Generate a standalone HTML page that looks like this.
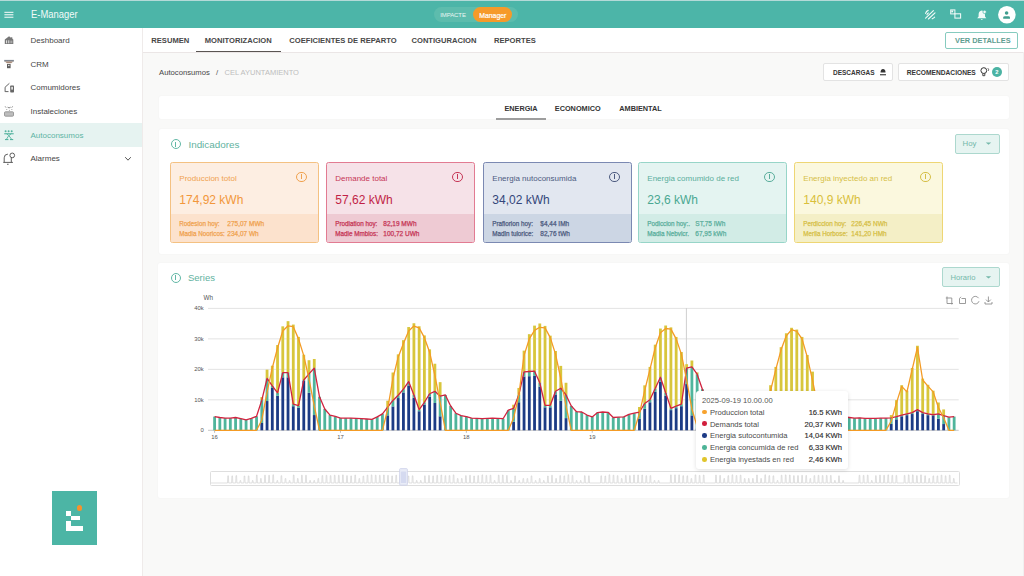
<!DOCTYPE html>
<html><head><meta charset="utf-8">
<style>
*{box-sizing:border-box;margin:0;padding:0}
html,body{width:1024px;height:576px;overflow:hidden;background:#f9f9f8;font-family:"Liberation Sans",sans-serif;color:#444;position:relative}
.abs{position:absolute}
.t{position:absolute;white-space:nowrap;line-height:1}
#top{position:absolute;left:0;top:0;width:1024px;height:28px;background:#4cb5a8;border-top:1px solid #b4dad8}
#side{position:absolute;left:0;top:28px;width:143px;height:548px;background:#fff;border-right:1px solid #efebea}
.si{position:absolute;font-size:8px;color:#464646;left:30.5px}
#tabs{position:absolute;left:143px;top:28px;width:881px;height:24.5px;background:#fff;border-bottom:1px solid #ebe6e6}
.tb{position:absolute;top:9px;font-size:7.6px;font-weight:bold;color:#474747;white-space:nowrap;line-height:1}
.card{position:absolute;background:#fff;border-radius:2px;box-shadow:0 0 1.5px rgba(0,0,0,0.05)}
.kpi{position:absolute;top:162px;width:149px;height:81px;border:1px solid;border-radius:2.5px;overflow:hidden}
.kpi .tt{position:absolute;left:8.3px;top:11.6px;font-size:8px;white-space:nowrap;line-height:1}
.kpi .v{position:absolute;left:8.3px;top:30.6px;font-size:12px;white-space:nowrap;line-height:1}
.kpi .b{position:absolute;left:0;top:51px;width:100%;height:30px}
.kpi .l{position:absolute;left:8.3px;font-size:6.3px;font-weight:normal;white-space:nowrap;line-height:1;-webkit-text-stroke:0.25px currentColor}
.kpi .l b{font-weight:normal;font-size:6.5px;top:-0.2px}
.kpi .l b{position:absolute;left:48px}
.kpi .ic{position:absolute;left:125.4px;top:8.8px;width:10.2px;height:10.2px;border:1.2px solid;border-radius:50%}
.kpi .ic:after{content:"";position:absolute;left:3.3px;top:1.6px;width:1.2px;height:4.2px;background:currentColor}
.btn{position:absolute;background:#fff;border:1px solid #e3e3e3;border-radius:2px}
.tip .r{position:absolute;left:13.6px;font-size:7.6px;color:#4a4a4a;white-space:nowrap;line-height:1}
.tip .dot{position:absolute;left:6px;width:4.6px;height:4.6px;border-radius:50%}
.tip .val{position:absolute;right:5.8px;font-size:7.6px;color:#2e2e2e;white-space:nowrap;line-height:1;font-weight:normal;-webkit-text-stroke:0.15px #2e2e2e}
</style></head><body>
<div id="top">
  <svg class="abs" style="left:0;top:-1px" width="140" height="28">
    <g fill="#eaf6f3"><rect x="4.4" y="11.8" width="9" height="1.1"/><rect x="4.4" y="14.2" width="9" height="1.1"/><rect x="4.4" y="16.7" width="9" height="1.1"/></g>
  </svg>
  <div class="t" style="left:30.5px;top:7.6px;font-size:10.6px;color:#f2faf8;transform:scaleX(0.89);transform-origin:0 0">E-Manager</div>
  <div class="abs" style="left:434px;top:6px;width:84px;height:15px;border-radius:8px;background:#5dbcad"></div>
  <div class="t" style="left:440.3px;top:10.5px;font-size:6px;color:#e9f6f3;letter-spacing:-0.1px">IMPACTE</div>
  <div class="abs" style="left:472.7px;top:6px;width:39.5px;height:15px;border-radius:8px;background:#f69a2a"></div>
  <div class="t" style="left:479.2px;top:11.7px;font-size:6.9px;color:#fff;-webkit-text-stroke:0.2px #fff">Manager</div>
  <svg class="abs" style="left:900px;top:-1px" width="124" height="28">
    <g stroke="#f2faf8" stroke-width="1.15" fill="none" stroke-linecap="round">
      <line x1="25.6" y1="18.2" x2="33.4" y2="10.6"/><line x1="28.4" y1="19" x2="35" y2="12.8"/>
      <path d="M25.6 13.4 q0.6 -2.2 2.6 -3"/><path d="M27 14.6 q0.4 -1.2 1.4 -1.6"/>
      <path d="M32.2 18.8 q1.4 -0.4 2.4 -1.6"/>
    </g>
    <rect x="50.7" y="9.9" width="4.2" height="4" fill="none" stroke="#f2faf8" stroke-width="1"/>
    <rect x="51.3" y="10.5" width="1.8" height="1.8" fill="#f2faf8"/>
    <rect x="54.9" y="13.8" width="5.7" height="4.3" fill="none" stroke="#f2faf8" stroke-width="1.05"/>
    <path d="M77.2 18.2 H86.3 L85 16.6 V14.6 Q85 11 81.8 10.6 Q78.6 11 78.6 14.6 V16.6 Z M80.6 18.9 H83 L81.8 20 Z" fill="#f2faf8"/>
    <circle cx="84.6" cy="11.9" r="1.7" fill="#f2faf8" stroke="#4cb5a8" stroke-width="0.7"/>
    <circle cx="106.9" cy="14.8" r="8.8" fill="#fff"/>
    <circle cx="106.6" cy="13" r="1.8" fill="#3f9e8f"/>
    <path d="M103.2 18.7 V17.6 Q103.2 16.2 105 16.2 H108.3 Q110 16.2 110 17.6 V18.7 Z" fill="#3f9e8f"/>
  </svg>
</div>

<div id="side">
  <svg class="abs" style="left:0;top:-28px" width="20" height="200">
    <path d="M9.05 36.3 L13.3 39.6 V44.1 H4.8 V39.6 Z" fill="#777"/>
    <rect x="11" y="37.3" width="1.3" height="2" fill="#777"/>
    <g fill="#dcdcdc"><rect x="6" y="40.3" width="1.1" height="3"/><rect x="8.2" y="40.3" width="1.1" height="3"/><rect x="10.3" y="40.6" width="2.1" height="2.6" fill="#a9a9a9"/></g>
    <path d="M4.2 59.9 H13.9 V61.6 H4.2 Z" fill="#7f8690"/>
    <path d="M4.8 61.6 H13.3 L11.2 63.3 H7 Z" fill="#a98c7a"/>
    <rect x="7" y="64" width="3.6" height="4.2" fill="#5e5e5e"/>
    <circle cx="8.8" cy="65.5" r="0.8" fill="#e8e8e8"/>
    <g fill="none" stroke="#666" stroke-width="1"><path d="M5.1 91.8 V87.2 L9.4 83.3"/><path d="M5.1 91.6 H8.5"/></g>
    <rect x="10.2" y="85.5" width="3.8" height="7" rx="0.7" fill="#666"/><rect x="11.3" y="86.8" width="1.6" height="2.8" fill="#eee"/>
    <g fill="none" stroke="#777" stroke-width="0.9"><path d="M5.2 106.4 l0.8 1.2 M7.6 107.2 q1.4 1.4 3 0 M12.6 106.4 l-0.8 1.2"/></g>
    <g fill="#888"><circle cx="6.8" cy="109.6" r="0.5"/><circle cx="9.4" cy="110.2" r="0.5"/><circle cx="11.9" cy="109.6" r="0.5"/></g>
    <rect x="4.5" y="111.8" width="9" height="4.4" rx="0.9" fill="#bdbdbd" stroke="#8a8a8a" stroke-width="0.8"/>
    <g fill="none" stroke="#555" stroke-width="0.95">
      <path d="M3.3 162.4 H12.9 M4.2 162.4 V157.8 Q4.2 154.2 7.9 154.1"/><path d="M11.3 157.8 V162.4"/>
      <circle cx="12.25" cy="155.4" r="2.35"/>
    </g>
    <rect x="7" y="163.8" width="1.6" height="0.9" fill="#555"/>
  </svg>
  <div class="si t" style="top:9.4px">Deshboard</div>
  <div class="si t" style="top:32.8px">CRM</div>
  <div class="si t" style="top:56.4px">Comumidores</div>
  <div class="si t" style="top:80px">Instaleciones</div>
  <div class="abs" style="left:0;top:95.4px;width:142px;height:23.2px;background:#e6f3f1"></div>
  <svg class="abs" style="left:0;top:-28px" width="20" height="200">
    <g fill="#54b39f"><circle cx="5.6" cy="131.3" r="1"/><circle cx="8.6" cy="131.3" r="1"/><circle cx="11.7" cy="131.3" r="1"/>
    <rect x="4.2" y="133.2" width="9.5" height="1.1"/><rect x="5" y="139" width="3.4" height="1.1"/><rect x="10" y="139" width="3.2" height="1.1"/></g>
    <path d="M6.6 133.8 L8.8 135.5 L11.3 133.8 M8.8 135.5 L6.6 139 M8.8 135.5 L11.4 139" fill="none" stroke="#54b39f" stroke-width="0.9"/>
  </svg>
  <div class="si t" style="top:103.6px;color:#5db4a4">Autoconsumos</div>
  <div class="si t" style="top:127px">Alarmes</div>
  <svg class="abs" style="left:120px;top:124px" width="16" height="10"><path d="M5.2 5.2 L8 8.2 L10.8 5.2" fill="none" stroke="#555" stroke-width="1"/></svg>
  <div class="abs" style="left:51.8px;top:463.2px;width:45.3px;height:53.6px;background:#4cb5a5"></div>
  <div class="abs" style="left:65.9px;top:482.9px;width:5.3px;height:4.8px;background:#fff"></div>
  <div class="abs" style="left:71.2px;top:487.7px;width:8.8px;height:4.8px;background:#fff"></div>
  <div class="abs" style="left:65.9px;top:492.5px;width:5.3px;height:10.2px;background:#fff"></div>
  <div class="abs" style="left:65.9px;top:497.6px;width:16.9px;height:5.1px;background:#fff"></div>
  <div class="abs" style="left:76.8px;top:477.3px;width:5.6px;height:5.6px;border-radius:50%;background:#f7922c"></div>
</div>

<div id="tabs">
  <div class="tb" style="left:8.3px">RESUMEN</div>
  <div class="tb" style="left:61.8px">MONITORIZACION</div>
  <div class="abs" style="left:53px;top:22.8px;width:84.6px;height:1.4px;background:#5a5553"></div>
  <div class="tb" style="left:146.3px">COEFICIENTES DE REPARTO</div>
  <div class="tb" style="left:268.5px">CONTIGURACION</div>
  <div class="tb" style="left:351px">REPORTES</div>
  <div class="abs" style="left:802.4px;top:3.5px;width:72.4px;height:17.2px;border:1px solid #86cbbf;border-radius:2px"></div>
  <div class="tb" style="left:812px;top:9px;color:#5e9d91;font-size:7.4px">VER DETALLES</div>
</div>

<!-- breadcrumb -->
<div class="t" style="left:159px;top:69px;font-size:7.7px;color:#474747">Autoconsumos</div>
<div class="t" style="left:216px;top:69px;font-size:7.7px;color:#555">/</div>
<div class="t" style="left:224.6px;top:69px;font-size:7.5px;color:#bdbdbd">CEL AYUNTAMIENTO</div>
<div class="btn" style="left:823.4px;top:63.4px;width:69.7px;height:17.4px"></div>
<div class="t" style="left:833px;top:69.6px;font-size:6.5px;font-weight:bold;color:#363636">DESCARGAS</div>
<svg class="abs" style="left:878px;top:66px" width="10" height="12"><path d="M2.5 6.6 q0 -3.6 2.5 -3.6 q2.5 0 2.5 3.6 z" fill="#333"/><rect x="2" y="8.2" width="6" height="1.1" fill="#333"/></svg>
<div class="btn" style="left:897.6px;top:63.4px;width:111.7px;height:17.4px"></div>
<div class="t" style="left:906.8px;top:69.6px;font-size:6.65px;font-weight:bold;color:#363636">RECOMENDACIONES</div>
<svg class="abs" style="left:978px;top:65px" width="14" height="14"><circle cx="5.8" cy="5.6" r="2.9" fill="none" stroke="#333" stroke-width="1"/><path d="M4.8 8.5 v2.2 h2 v-2.2" fill="none" stroke="#333" stroke-width="0.9"/><path d="M9.8 3.2 q1.3 1 0.6 2.6" fill="none" stroke="#333" stroke-width="0.8"/></svg>
<div class="abs" style="left:991.8px;top:67.4px;width:10.1px;height:10.1px;border-radius:50%;background:#4bb3a3"></div>
<div class="t" style="left:995.3px;top:69.8px;font-size:5.8px;color:#fff;font-weight:bold">2</div>

<!-- tabs card -->
<div class="card" style="left:158.6px;top:95.6px;width:850.5px;height:23.6px"></div>
<div class="tb" style="left:504.4px;top:104.8px;font-size:7.3px;color:#333">ENERGIA</div>
<div class="tb" style="left:554.8px;top:104.8px;font-size:7.3px;color:#333">ECONOMICO</div>
<div class="tb" style="left:619.3px;top:104.8px;font-size:7.3px;color:#333">AMBIENTAL</div>
<div class="abs" style="left:496px;top:118px;width:49.8px;height:1.6px;background:#9d9d9d"></div>

<!-- indicadores card -->
<div class="card" style="left:158.6px;top:128.6px;width:850.5px;height:125.2px"></div>
<div class="abs" style="left:170.5px;top:139.2px;width:10.2px;height:10.2px;border:1.2px solid #62b8a6;border-radius:50%"></div>
<div class="abs" style="left:175px;top:141.8px;width:1.2px;height:5px;background:#62b8a6"></div>
<div class="t" style="left:188.4px;top:139.8px;font-size:9.9px;color:#5fb2a0">Indicadores</div>
<div class="abs" style="left:955.2px;top:134.2px;width:45.1px;height:19.6px;background:#e6f4f1;border:1px solid #acd8ce;border-radius:2px"></div>
<div class="t" style="left:962.6px;top:140px;font-size:7.8px;color:#74b8aa">Hoy</div>
<svg class="abs" style="left:984px;top:141px" width="9" height="5"><path d="M1.8 1.5 H7.2 L4.5 3.8 Z" fill="#74b8aa"/></svg>

<div class="kpi" style="left:170px;border-color:#f4c182;background:#fdeee2;color:#f0a24f">
  <div class="tt">Produccion totol</div><div class="ic"></div>
  <div class="v" style="color:#f2973b">174,92 kWh</div>
  <div class="b" style="background:#fce2cd"></div>
  <div class="l" style="top:58.3px">Rodesion hoy:<b>275,07 MWh</b></div>
  <div class="l" style="top:68.2px">Madia Nooricos:<b>234,07 Wh</b></div>
</div>
<div class="kpi" style="left:326px;border-color:#e27b92;background:#f6e2e8;color:#c63656">
  <div class="tt">Demande total</div><div class="ic"></div>
  <div class="v" style="color:#c11f46">57,62 kWh</div>
  <div class="b" style="background:#eecad3"></div>
  <div class="l" style="top:58.3px">Prodiation hoy:<b>82,19 MWh</b></div>
  <div class="l" style="top:68.2px">Madie Mmbios:<b>100,72 UWh</b></div>
</div>
<div class="kpi" style="left:483px;border-color:#7b89b2;background:#e2e7f0;color:#4d5b80">
  <div class="tt">Energia nutoconsumida</div><div class="ic"></div>
  <div class="v" style="color:#34467a">34,02 kWh</div>
  <div class="b" style="background:#ccd6e4"></div>
  <div class="l" style="top:58.3px">Prafiorion hoy:<b>$4,44 IMh</b></div>
  <div class="l" style="top:68.2px">Madln tulorice:<b>82,76 tWh</b></div>
</div>
<div class="kpi" style="left:638px;border-color:#97d5c8;background:#e4f4f1;color:#5aae9c">
  <div class="tt">Energia comumido de red</div><div class="ic"></div>
  <div class="v" style="color:#4aa892">23,6 kWh</div>
  <div class="b" style="background:#d2ece6"></div>
  <div class="l" style="top:58.3px">Podiccion hoy:.<b>ST,75 IWh</b></div>
  <div class="l" style="top:68.2px">Madia Nebvicr.<b>67,95 kWh</b></div>
</div>
<div class="kpi" style="left:794px;border-color:#eed674;background:#fbf8de;color:#d6bf47">
  <div class="tt">Energia inyectedo an red</div><div class="ic"></div>
  <div class="v" style="color:#d9bf3b">140,9 kWh</div>
  <div class="b" style="background:#f4efc6"></div>
  <div class="l" style="top:58.3px">Perdiccion hoy:<b>226,45 NWh</b></div>
  <div class="l" style="top:68.2px">Merila Horbose:<b>141,20 HMh</b></div>
</div>

<!-- series card -->
<div class="card" style="left:158.4px;top:262.7px;width:850.2px;height:235.2px"></div>
<div class="abs" style="left:170.6px;top:272.6px;width:10.2px;height:10.2px;border:1.2px solid #62b8a6;border-radius:50%"></div>
<div class="abs" style="left:175.1px;top:275.2px;width:1.2px;height:5px;background:#62b8a6"></div>
<div class="t" style="left:188px;top:273px;font-size:9.5px;color:#5fb2a0">Series</div>
<div class="abs" style="left:942.2px;top:267.2px;width:58.2px;height:20px;background:#e6f4f1;border:1px solid #acd8ce;border-radius:2px"></div>
<div class="t" style="left:950.6px;top:274px;font-size:7.6px;color:#74b8aa">Horario</div>
<svg class="abs" style="left:984px;top:275px" width="9" height="5"><path d="M1.8 1.2 H7.2 L4.5 3.5 Z" fill="#74b8aa"/></svg>
<svg class="abs" style="left:940px;top:292px" width="60" height="16">
  <g fill="none" stroke="#8a8a8a" stroke-width="0.85">
    <path d="M7 4.5 V11.5 H13 M5.8 6 H11.8 V12.5"/>
    <path d="M19.5 6.5 L21 4.8 M19.5 6.5 V11.5 H25.5 V6.5 H21.5"/>
    <path d="M38.6 6.2 A3.8 3.8 0 1 0 39 9.2"/>
    <path d="M48.4 4.5 V10 M46 7.6 L48.4 10 L50.8 7.6 M45 10 V12 H52 V10"/>
  </g>
</svg>

<svg class="abs" style="left:0;top:0" width="1024" height="576" viewBox="0 0 1024 576">
<g><line x1="208" x2="958.7" y1="399.82" y2="399.82" stroke="#e3e3e3" stroke-width="1"/><line x1="208" x2="958.7" y1="369.35" y2="369.35" stroke="#e3e3e3" stroke-width="1"/><line x1="208" x2="958.7" y1="338.88" y2="338.88" stroke="#e3e3e3" stroke-width="1"/><line x1="208" x2="958.7" y1="308.40" y2="308.40" stroke="#e3e3e3" stroke-width="1"/></g>
<line x1="208" x2="958.7" y1="430.3" y2="430.3" stroke="#c9c9c9" stroke-width="1"/>
<line x1="686.4" x2="686.4" y1="308" y2="430" stroke="#cfcfcf" stroke-width="1"/>
<g><rect x="213.20" y="416.59" width="2.8" height="13.71" fill="#4fb59c"/><rect x="218.44" y="417.50" width="2.8" height="12.80" fill="#4fb59c"/><rect x="223.69" y="418.11" width="2.8" height="12.19" fill="#4fb59c"/><rect x="228.93" y="418.11" width="2.8" height="12.19" fill="#4fb59c"/><rect x="234.18" y="417.50" width="2.8" height="12.80" fill="#4fb59c"/><rect x="239.42" y="418.72" width="2.8" height="11.58" fill="#4fb59c"/><rect x="244.67" y="419.94" width="2.8" height="10.36" fill="#4fb59c"/><rect x="249.91" y="418.41" width="2.8" height="11.89" fill="#4fb59c"/><rect x="255.16" y="416.28" width="2.8" height="14.02" fill="#4fb59c"/><rect x="260.41" y="422.99" width="2.8" height="7.31" fill="#1c3b85"/><rect x="260.41" y="400.13" width="2.8" height="22.86" fill="#4fb59c"/><rect x="260.41" y="397.08" width="2.8" height="3.05" fill="#d8c63c"/><rect x="265.65" y="401.04" width="2.8" height="29.26" fill="#1c3b85"/><rect x="265.65" y="378.49" width="2.8" height="22.55" fill="#4fb59c"/><rect x="265.65" y="369.65" width="2.8" height="8.84" fill="#d8c63c"/><rect x="270.90" y="387.94" width="2.8" height="42.36" fill="#1c3b85"/><rect x="270.90" y="385.81" width="2.8" height="2.13" fill="#4fb59c"/><rect x="270.90" y="365.69" width="2.8" height="20.11" fill="#d8c63c"/><rect x="276.14" y="395.81" width="2.8" height="34.49" fill="#1c3b85"/><rect x="276.14" y="392.82" width="2.8" height="3.00" fill="#4fb59c"/><rect x="276.14" y="345.02" width="2.8" height="47.80" fill="#d8c63c"/><rect x="281.38" y="377.31" width="2.8" height="52.99" fill="#1c3b85"/><rect x="281.38" y="372.70" width="2.8" height="4.61" fill="#4fb59c"/><rect x="281.38" y="326.34" width="2.8" height="46.36" fill="#d8c63c"/><rect x="286.63" y="377.31" width="2.8" height="52.99" fill="#1c3b85"/><rect x="286.63" y="372.70" width="2.8" height="4.61" fill="#4fb59c"/><rect x="286.63" y="321.16" width="2.8" height="51.54" fill="#d8c63c"/><rect x="291.88" y="406.19" width="2.8" height="24.11" fill="#1c3b85"/><rect x="291.88" y="404.09" width="2.8" height="2.10" fill="#4fb59c"/><rect x="291.88" y="324.59" width="2.8" height="79.50" fill="#d8c63c"/><rect x="297.12" y="407.59" width="2.8" height="22.71" fill="#1c3b85"/><rect x="297.12" y="405.62" width="2.8" height="1.97" fill="#4fb59c"/><rect x="297.12" y="336.90" width="2.8" height="68.72" fill="#d8c63c"/><rect x="302.37" y="380.93" width="2.8" height="49.37" fill="#1c3b85"/><rect x="302.37" y="380.02" width="2.8" height="0.91" fill="#4fb59c"/><rect x="302.37" y="354.72" width="2.8" height="25.29" fill="#d8c63c"/><rect x="307.61" y="392.82" width="2.8" height="37.48" fill="#1c3b85"/><rect x="307.61" y="373.92" width="2.8" height="18.89" fill="#4fb59c"/><rect x="307.61" y="360.21" width="2.8" height="13.71" fill="#d8c63c"/><rect x="312.86" y="415.06" width="2.8" height="15.24" fill="#1c3b85"/><rect x="312.86" y="368.13" width="2.8" height="46.93" fill="#4fb59c"/><rect x="312.86" y="358.99" width="2.8" height="9.14" fill="#d8c63c"/><rect x="318.10" y="396.78" width="2.8" height="33.52" fill="#4fb59c"/><rect x="323.35" y="408.97" width="2.8" height="21.33" fill="#4fb59c"/><rect x="328.59" y="415.06" width="2.8" height="15.24" fill="#4fb59c"/><rect x="333.84" y="416.28" width="2.8" height="14.02" fill="#4fb59c"/><rect x="339.08" y="418.11" width="2.8" height="12.19" fill="#4fb59c"/><rect x="344.33" y="418.11" width="2.8" height="12.19" fill="#4fb59c"/><rect x="349.57" y="418.11" width="2.8" height="12.19" fill="#4fb59c"/><rect x="354.82" y="418.41" width="2.8" height="11.89" fill="#4fb59c"/><rect x="360.06" y="418.72" width="2.8" height="11.58" fill="#4fb59c"/><rect x="365.31" y="419.02" width="2.8" height="11.28" fill="#4fb59c"/><rect x="370.55" y="419.33" width="2.8" height="10.97" fill="#4fb59c"/><rect x="375.80" y="416.89" width="2.8" height="13.41" fill="#4fb59c"/><rect x="381.04" y="413.84" width="2.8" height="16.46" fill="#4fb59c"/><rect x="386.29" y="415.37" width="2.8" height="14.93" fill="#1c3b85"/><rect x="386.29" y="407.14" width="2.8" height="8.23" fill="#4fb59c"/><rect x="386.29" y="400.74" width="2.8" height="6.40" fill="#d8c63c"/><rect x="391.53" y="406.41" width="2.8" height="23.89" fill="#1c3b85"/><rect x="391.53" y="400.43" width="2.8" height="5.97" fill="#4fb59c"/><rect x="391.53" y="372.52" width="2.8" height="27.92" fill="#d8c63c"/><rect x="396.78" y="398.06" width="2.8" height="32.24" fill="#1c3b85"/><rect x="396.78" y="395.25" width="2.8" height="2.80" fill="#4fb59c"/><rect x="396.78" y="354.36" width="2.8" height="40.90" fill="#d8c63c"/><rect x="402.02" y="392.45" width="2.8" height="37.85" fill="#1c3b85"/><rect x="402.02" y="389.16" width="2.8" height="3.29" fill="#4fb59c"/><rect x="402.02" y="340.15" width="2.8" height="49.00" fill="#d8c63c"/><rect x="407.26" y="385.44" width="2.8" height="44.86" fill="#1c3b85"/><rect x="407.26" y="381.54" width="2.8" height="3.90" fill="#4fb59c"/><rect x="407.26" y="327.05" width="2.8" height="54.49" fill="#d8c63c"/><rect x="412.51" y="397.78" width="2.8" height="32.52" fill="#1c3b85"/><rect x="412.51" y="394.95" width="2.8" height="2.83" fill="#4fb59c"/><rect x="412.51" y="323.25" width="2.8" height="71.70" fill="#d8c63c"/><rect x="417.75" y="411.23" width="2.8" height="19.07" fill="#1c3b85"/><rect x="417.75" y="409.58" width="2.8" height="1.66" fill="#4fb59c"/><rect x="417.75" y="326.25" width="2.8" height="83.33" fill="#d8c63c"/><rect x="423.00" y="404.51" width="2.8" height="25.79" fill="#1c3b85"/><rect x="423.00" y="402.26" width="2.8" height="2.24" fill="#4fb59c"/><rect x="423.00" y="335.41" width="2.8" height="66.85" fill="#d8c63c"/><rect x="428.25" y="396.66" width="2.8" height="33.64" fill="#1c3b85"/><rect x="428.25" y="393.73" width="2.8" height="2.93" fill="#4fb59c"/><rect x="428.25" y="349.36" width="2.8" height="44.37" fill="#d8c63c"/><rect x="433.49" y="402.99" width="2.8" height="27.31" fill="#1c3b85"/><rect x="433.49" y="391.29" width="2.8" height="11.70" fill="#4fb59c"/><rect x="433.49" y="363.74" width="2.8" height="27.55" fill="#d8c63c"/><rect x="438.74" y="416.28" width="2.8" height="14.02" fill="#1c3b85"/><rect x="438.74" y="396.17" width="2.8" height="20.11" fill="#4fb59c"/><rect x="438.74" y="382.15" width="2.8" height="14.02" fill="#d8c63c"/><rect x="443.98" y="394.95" width="2.8" height="35.35" fill="#4fb59c"/><rect x="449.23" y="405.92" width="2.8" height="24.38" fill="#4fb59c"/><rect x="454.47" y="413.23" width="2.8" height="17.07" fill="#4fb59c"/><rect x="459.72" y="415.67" width="2.8" height="14.63" fill="#4fb59c"/><rect x="464.96" y="416.59" width="2.8" height="13.71" fill="#4fb59c"/><rect x="470.21" y="418.11" width="2.8" height="12.19" fill="#4fb59c"/><rect x="475.45" y="418.41" width="2.8" height="11.89" fill="#4fb59c"/><rect x="480.70" y="418.72" width="2.8" height="11.58" fill="#4fb59c"/><rect x="485.94" y="418.41" width="2.8" height="11.89" fill="#4fb59c"/><rect x="491.19" y="418.11" width="2.8" height="12.19" fill="#4fb59c"/><rect x="496.43" y="418.41" width="2.8" height="11.89" fill="#4fb59c"/><rect x="501.68" y="418.72" width="2.8" height="11.58" fill="#4fb59c"/><rect x="506.92" y="410.19" width="2.8" height="20.11" fill="#4fb59c"/><rect x="512.17" y="421.77" width="2.8" height="8.53" fill="#1c3b85"/><rect x="512.17" y="408.36" width="2.8" height="13.41" fill="#4fb59c"/><rect x="512.17" y="404.70" width="2.8" height="3.66" fill="#d8c63c"/><rect x="517.41" y="402.26" width="2.8" height="28.04" fill="#1c3b85"/><rect x="517.41" y="394.95" width="2.8" height="7.31" fill="#4fb59c"/><rect x="517.41" y="387.94" width="2.8" height="7.01" fill="#d8c63c"/><rect x="522.65" y="376.47" width="2.8" height="53.83" fill="#1c3b85"/><rect x="522.65" y="371.79" width="2.8" height="4.68" fill="#4fb59c"/><rect x="522.65" y="350.65" width="2.8" height="21.14" fill="#d8c63c"/><rect x="527.90" y="376.19" width="2.8" height="54.11" fill="#1c3b85"/><rect x="527.90" y="371.48" width="2.8" height="4.71" fill="#4fb59c"/><rect x="527.90" y="334.17" width="2.8" height="37.31" fill="#d8c63c"/><rect x="533.14" y="375.91" width="2.8" height="54.39" fill="#1c3b85"/><rect x="533.14" y="371.18" width="2.8" height="4.73" fill="#4fb59c"/><rect x="533.14" y="325.61" width="2.8" height="45.57" fill="#d8c63c"/><rect x="538.39" y="386.56" width="2.8" height="43.74" fill="#1c3b85"/><rect x="538.39" y="382.76" width="2.8" height="3.80" fill="#4fb59c"/><rect x="538.39" y="323.49" width="2.8" height="59.27" fill="#d8c63c"/><rect x="543.63" y="407.31" width="2.8" height="22.99" fill="#1c3b85"/><rect x="543.63" y="405.31" width="2.8" height="2.00" fill="#4fb59c"/><rect x="543.63" y="325.90" width="2.8" height="79.41" fill="#d8c63c"/><rect x="548.88" y="407.31" width="2.8" height="22.99" fill="#1c3b85"/><rect x="548.88" y="405.31" width="2.8" height="2.00" fill="#4fb59c"/><rect x="548.88" y="335.66" width="2.8" height="69.65" fill="#d8c63c"/><rect x="554.12" y="394.41" width="2.8" height="35.89" fill="#1c3b85"/><rect x="554.12" y="391.29" width="2.8" height="3.12" fill="#4fb59c"/><rect x="554.12" y="350.99" width="2.8" height="40.30" fill="#d8c63c"/><rect x="559.37" y="400.86" width="2.8" height="29.44" fill="#1c3b85"/><rect x="559.37" y="388.24" width="2.8" height="12.62" fill="#4fb59c"/><rect x="559.37" y="365.88" width="2.8" height="22.37" fill="#d8c63c"/><rect x="564.62" y="418.11" width="2.8" height="12.19" fill="#1c3b85"/><rect x="564.62" y="394.95" width="2.8" height="23.16" fill="#4fb59c"/><rect x="564.62" y="382.76" width="2.8" height="12.19" fill="#d8c63c"/><rect x="569.86" y="405.92" width="2.8" height="24.38" fill="#4fb59c"/><rect x="575.11" y="411.71" width="2.8" height="18.59" fill="#4fb59c"/><rect x="580.35" y="412.01" width="2.8" height="18.29" fill="#4fb59c"/><rect x="585.60" y="415.06" width="2.8" height="15.24" fill="#4fb59c"/><rect x="590.84" y="416.89" width="2.8" height="13.41" fill="#4fb59c"/><rect x="596.09" y="412.62" width="2.8" height="17.68" fill="#4fb59c"/><rect x="601.33" y="412.01" width="2.8" height="18.29" fill="#4fb59c"/><rect x="606.58" y="412.32" width="2.8" height="17.98" fill="#4fb59c"/><rect x="611.82" y="417.50" width="2.8" height="12.80" fill="#4fb59c"/><rect x="617.07" y="417.20" width="2.8" height="13.10" fill="#4fb59c"/><rect x="622.31" y="416.89" width="2.8" height="13.41" fill="#4fb59c"/><rect x="627.56" y="414.45" width="2.8" height="15.85" fill="#4fb59c"/><rect x="632.80" y="413.23" width="2.8" height="17.07" fill="#4fb59c"/><rect x="638.05" y="418.57" width="2.8" height="11.73" fill="#1c3b85"/><rect x="638.05" y="412.01" width="2.8" height="6.55" fill="#4fb59c"/><rect x="638.05" y="406.99" width="2.8" height="5.03" fill="#d8c63c"/><rect x="643.29" y="408.85" width="2.8" height="21.45" fill="#1c3b85"/><rect x="643.29" y="403.48" width="2.8" height="5.36" fill="#4fb59c"/><rect x="643.29" y="385.32" width="2.8" height="18.16" fill="#d8c63c"/><rect x="648.54" y="402.26" width="2.8" height="28.04" fill="#1c3b85"/><rect x="648.54" y="399.82" width="2.8" height="2.44" fill="#4fb59c"/><rect x="648.54" y="366.91" width="2.8" height="32.91" fill="#d8c63c"/><rect x="653.78" y="391.89" width="2.8" height="38.41" fill="#1c3b85"/><rect x="653.78" y="388.55" width="2.8" height="3.34" fill="#4fb59c"/><rect x="653.78" y="344.68" width="2.8" height="43.87" fill="#d8c63c"/><rect x="659.02" y="381.52" width="2.8" height="48.78" fill="#1c3b85"/><rect x="659.02" y="377.27" width="2.8" height="4.24" fill="#4fb59c"/><rect x="659.02" y="328.54" width="2.8" height="48.74" fill="#d8c63c"/><rect x="664.27" y="395.81" width="2.8" height="34.49" fill="#1c3b85"/><rect x="664.27" y="392.82" width="2.8" height="3.00" fill="#4fb59c"/><rect x="664.27" y="325.51" width="2.8" height="67.30" fill="#d8c63c"/><rect x="669.51" y="410.11" width="2.8" height="20.19" fill="#1c3b85"/><rect x="669.51" y="408.36" width="2.8" height="1.76" fill="#4fb59c"/><rect x="669.51" y="327.37" width="2.8" height="80.99" fill="#d8c63c"/><rect x="674.76" y="408.15" width="2.8" height="22.15" fill="#1c3b85"/><rect x="674.76" y="406.22" width="2.8" height="1.93" fill="#4fb59c"/><rect x="674.76" y="336.95" width="2.8" height="69.28" fill="#d8c63c"/><rect x="680.00" y="406.19" width="2.8" height="24.11" fill="#1c3b85"/><rect x="680.00" y="404.09" width="2.8" height="2.10" fill="#4fb59c"/><rect x="680.00" y="352.02" width="2.8" height="52.08" fill="#d8c63c"/><rect x="685.25" y="384.04" width="2.8" height="46.26" fill="#1c3b85"/><rect x="685.25" y="368.22" width="2.8" height="15.82" fill="#4fb59c"/><rect x="685.25" y="364.20" width="2.8" height="4.02" fill="#d8c63c"/><rect x="690.50" y="415.37" width="2.8" height="14.93" fill="#1c3b85"/><rect x="690.50" y="366.91" width="2.8" height="48.46" fill="#4fb59c"/><rect x="690.50" y="360.51" width="2.8" height="6.40" fill="#d8c63c"/><rect x="695.74" y="428.47" width="2.8" height="1.83" fill="#1c3b85"/><rect x="695.74" y="374.23" width="2.8" height="54.25" fill="#4fb59c"/><rect x="695.74" y="372.40" width="2.8" height="1.83" fill="#d8c63c"/><rect x="700.99" y="389.16" width="2.8" height="41.14" fill="#4fb59c"/><rect x="706.23" y="405.92" width="2.8" height="24.38" fill="#4fb59c"/><rect x="711.48" y="413.54" width="2.8" height="16.76" fill="#4fb59c"/><rect x="716.72" y="416.59" width="2.8" height="13.71" fill="#4fb59c"/><rect x="721.97" y="417.50" width="2.8" height="12.80" fill="#4fb59c"/><rect x="727.21" y="418.11" width="2.8" height="12.19" fill="#4fb59c"/><rect x="732.46" y="418.11" width="2.8" height="12.19" fill="#4fb59c"/><rect x="737.70" y="417.81" width="2.8" height="12.49" fill="#4fb59c"/><rect x="742.95" y="418.11" width="2.8" height="12.19" fill="#4fb59c"/><rect x="748.19" y="417.50" width="2.8" height="12.80" fill="#4fb59c"/><rect x="753.44" y="416.59" width="2.8" height="13.71" fill="#4fb59c"/><rect x="758.68" y="413.54" width="2.8" height="16.76" fill="#4fb59c"/><rect x="763.93" y="417.50" width="2.8" height="12.80" fill="#1c3b85"/><rect x="763.93" y="408.97" width="2.8" height="8.53" fill="#4fb59c"/><rect x="763.93" y="403.48" width="2.8" height="5.49" fill="#d8c63c"/><rect x="769.17" y="408.36" width="2.8" height="21.94" fill="#1c3b85"/><rect x="769.17" y="402.87" width="2.8" height="5.49" fill="#4fb59c"/><rect x="769.17" y="385.20" width="2.8" height="17.68" fill="#d8c63c"/><rect x="774.42" y="402.26" width="2.8" height="28.04" fill="#1c3b85"/><rect x="774.42" y="399.82" width="2.8" height="2.44" fill="#4fb59c"/><rect x="774.42" y="366.91" width="2.8" height="32.91" fill="#d8c63c"/><rect x="779.66" y="399.46" width="2.8" height="30.84" fill="#1c3b85"/><rect x="779.66" y="396.78" width="2.8" height="2.68" fill="#4fb59c"/><rect x="779.66" y="347.16" width="2.8" height="49.61" fill="#d8c63c"/><rect x="784.91" y="400.86" width="2.8" height="29.44" fill="#1c3b85"/><rect x="784.91" y="398.30" width="2.8" height="2.56" fill="#4fb59c"/><rect x="784.91" y="333.27" width="2.8" height="65.03" fill="#d8c63c"/><rect x="790.15" y="407.87" width="2.8" height="22.43" fill="#1c3b85"/><rect x="790.15" y="405.92" width="2.8" height="1.95" fill="#4fb59c"/><rect x="790.15" y="327.78" width="2.8" height="78.14" fill="#d8c63c"/><rect x="795.40" y="410.67" width="2.8" height="19.63" fill="#1c3b85"/><rect x="795.40" y="408.97" width="2.8" height="1.71" fill="#4fb59c"/><rect x="795.40" y="329.55" width="2.8" height="79.42" fill="#d8c63c"/><rect x="800.64" y="407.87" width="2.8" height="22.43" fill="#1c3b85"/><rect x="800.64" y="405.92" width="2.8" height="1.95" fill="#4fb59c"/><rect x="800.64" y="336.92" width="2.8" height="69.00" fill="#d8c63c"/><rect x="805.89" y="405.07" width="2.8" height="25.23" fill="#1c3b85"/><rect x="805.89" y="402.87" width="2.8" height="2.19" fill="#4fb59c"/><rect x="805.89" y="354.97" width="2.8" height="47.91" fill="#d8c63c"/><rect x="811.13" y="410.03" width="2.8" height="20.27" fill="#1c3b85"/><rect x="811.13" y="401.35" width="2.8" height="8.69" fill="#4fb59c"/><rect x="811.13" y="371.64" width="2.8" height="29.71" fill="#d8c63c"/><rect x="816.38" y="418.11" width="2.8" height="12.19" fill="#1c3b85"/><rect x="816.38" y="405.92" width="2.8" height="12.19" fill="#4fb59c"/><rect x="816.38" y="393.73" width="2.8" height="12.19" fill="#d8c63c"/><rect x="821.62" y="412.01" width="2.8" height="18.29" fill="#4fb59c"/><rect x="826.87" y="415.06" width="2.8" height="15.24" fill="#4fb59c"/><rect x="832.11" y="416.59" width="2.8" height="13.71" fill="#4fb59c"/><rect x="837.36" y="417.20" width="2.8" height="13.10" fill="#4fb59c"/><rect x="842.60" y="416.89" width="2.8" height="13.41" fill="#4fb59c"/><rect x="847.85" y="417.50" width="2.8" height="12.80" fill="#4fb59c"/><rect x="853.09" y="418.11" width="2.8" height="12.19" fill="#4fb59c"/><rect x="858.34" y="417.81" width="2.8" height="12.49" fill="#4fb59c"/><rect x="863.58" y="418.41" width="2.8" height="11.89" fill="#4fb59c"/><rect x="868.83" y="418.41" width="2.8" height="11.89" fill="#4fb59c"/><rect x="874.07" y="418.41" width="2.8" height="11.89" fill="#4fb59c"/><rect x="879.32" y="418.11" width="2.8" height="12.19" fill="#4fb59c"/><rect x="884.56" y="418.11" width="2.8" height="12.19" fill="#4fb59c"/><rect x="889.81" y="423.90" width="2.8" height="6.40" fill="#1c3b85"/><rect x="889.81" y="417.81" width="2.8" height="6.10" fill="#4fb59c"/><rect x="889.81" y="415.06" width="2.8" height="2.74" fill="#d8c63c"/><rect x="895.05" y="419.33" width="2.8" height="10.97" fill="#1c3b85"/><rect x="895.05" y="416.59" width="2.8" height="2.74" fill="#4fb59c"/><rect x="895.05" y="400.13" width="2.8" height="16.46" fill="#d8c63c"/><rect x="900.30" y="416.28" width="2.8" height="14.02" fill="#1c3b85"/><rect x="900.30" y="415.06" width="2.8" height="1.22" fill="#4fb59c"/><rect x="900.30" y="385.20" width="2.8" height="29.87" fill="#d8c63c"/><rect x="905.54" y="415.16" width="2.8" height="15.14" fill="#1c3b85"/><rect x="905.54" y="413.84" width="2.8" height="1.32" fill="#4fb59c"/><rect x="905.54" y="390.58" width="2.8" height="23.26" fill="#d8c63c"/><rect x="910.79" y="414.04" width="2.8" height="16.26" fill="#1c3b85"/><rect x="910.79" y="412.62" width="2.8" height="1.41" fill="#4fb59c"/><rect x="910.79" y="367.94" width="2.8" height="44.69" fill="#d8c63c"/><rect x="916.03" y="411.23" width="2.8" height="19.07" fill="#1c3b85"/><rect x="916.03" y="409.58" width="2.8" height="1.66" fill="#4fb59c"/><rect x="916.03" y="345.75" width="2.8" height="63.83" fill="#d8c63c"/><rect x="921.28" y="414.04" width="2.8" height="16.26" fill="#1c3b85"/><rect x="921.28" y="412.62" width="2.8" height="1.41" fill="#4fb59c"/><rect x="921.28" y="378.60" width="2.8" height="34.02" fill="#d8c63c"/><rect x="926.52" y="415.16" width="2.8" height="15.14" fill="#1c3b85"/><rect x="926.52" y="413.84" width="2.8" height="1.32" fill="#4fb59c"/><rect x="926.52" y="384.79" width="2.8" height="29.05" fill="#d8c63c"/><rect x="931.77" y="416.00" width="2.8" height="14.30" fill="#1c3b85"/><rect x="931.77" y="414.76" width="2.8" height="1.24" fill="#4fb59c"/><rect x="931.77" y="390.66" width="2.8" height="24.10" fill="#d8c63c"/><rect x="937.01" y="418.78" width="2.8" height="11.52" fill="#1c3b85"/><rect x="937.01" y="413.84" width="2.8" height="4.94" fill="#4fb59c"/><rect x="937.01" y="402.51" width="2.8" height="11.34" fill="#d8c63c"/><rect x="942.26" y="424.05" width="2.8" height="6.25" fill="#1c3b85"/><rect x="942.26" y="415.67" width="2.8" height="8.38" fill="#4fb59c"/><rect x="942.26" y="409.42" width="2.8" height="6.25" fill="#d8c63c"/><rect x="947.50" y="417.20" width="2.8" height="13.10" fill="#4fb59c"/><rect x="952.75" y="416.59" width="2.8" height="13.71" fill="#4fb59c"/></g>
<polyline points="214.60,416.59 219.84,417.50 225.09,418.11 230.33,418.11 235.58,417.50 240.82,418.72 246.07,419.94 251.31,418.41 256.56,416.28 261.81,400.13 267.05,378.49 272.30,385.81 277.54,392.82 282.78,372.70 288.03,372.70 293.27,404.09 298.52,405.62 303.76,380.02 309.01,373.92 314.25,368.13 319.50,396.78 324.75,408.97 329.99,415.06 335.24,416.28 340.48,418.11 345.73,418.11 350.97,418.11 356.22,418.41 361.46,418.72 366.70,419.02 371.95,419.33 377.19,416.89 382.44,413.84 387.69,407.14 392.93,400.43 398.18,395.25 403.42,389.16 408.66,381.54 413.91,394.95 419.15,409.58 424.40,402.26 429.64,393.73 434.89,391.29 440.13,396.17 445.38,394.95 450.62,405.92 455.87,413.23 461.12,415.67 466.36,416.59 471.61,418.11 476.85,418.41 482.10,418.72 487.34,418.41 492.59,418.11 497.83,418.41 503.08,418.72 508.32,410.19 513.57,408.36 518.81,394.95 524.05,371.79 529.30,371.48 534.54,371.18 539.79,382.76 545.03,405.31 550.28,405.31 555.52,391.29 560.77,388.24 566.01,394.95 571.26,405.92 576.50,411.71 581.75,412.01 587.00,415.06 592.24,416.89 597.49,412.62 602.73,412.01 607.98,412.32 613.22,417.50 618.47,417.20 623.71,416.89 628.96,414.45 634.20,413.23 639.45,412.01 644.69,403.48 649.94,399.82 655.18,388.55 660.42,377.27 665.67,392.82 670.91,408.36 676.16,406.22 681.40,404.09 686.65,368.22 691.89,366.91 697.14,374.23 702.38,389.16 707.63,405.92 712.88,413.54 718.12,416.59 723.37,417.50 728.61,418.11 733.86,418.11 739.10,417.81 744.35,418.11 749.59,417.50 754.84,416.59 760.08,413.54 765.33,408.97 770.57,402.87 775.82,399.82 781.06,396.78 786.31,398.30 791.55,405.92 796.80,408.97 802.04,405.92 807.29,402.87 812.53,401.35 817.78,405.92 823.02,412.01 828.26,415.06 833.51,416.59 838.75,417.20 844.00,416.89 849.25,417.50 854.49,418.11 859.74,417.81 864.98,418.41 870.23,418.41 875.47,418.41 880.72,418.11 885.96,418.11 891.21,417.81 896.45,416.59 901.70,415.06 906.94,413.84 912.19,412.62 917.43,409.58 922.68,412.62 927.92,413.84 933.17,414.76 938.41,413.84 943.66,415.67 948.90,417.20 954.14,416.59" fill="none" stroke="#d1233f" stroke-width="1.3" stroke-linejoin="round"/>
<polyline points="214.60,430.30 219.84,430.30 225.09,430.30 230.33,430.30 235.58,430.30 240.82,430.30 246.07,430.30 251.31,430.30 256.56,430.30 261.81,419.94 267.05,392.21 272.30,367.83 277.54,348.02 282.78,330.95 288.03,325.77 293.27,326.69 298.52,338.88 303.76,355.64 309.01,379.10 314.25,405.92 319.50,430.30 324.75,430.30 329.99,430.30 335.24,430.30 340.48,430.30 345.73,430.30 350.97,430.30 356.22,430.30 361.46,430.30 366.70,430.30 371.95,430.30 377.19,430.30 382.44,430.30 387.69,408.97 392.93,378.49 398.18,357.16 403.42,343.45 408.66,330.95 413.91,326.08 419.15,327.90 424.40,337.66 429.64,352.28 434.89,375.44 440.13,402.26 445.38,430.30 450.62,430.30 455.87,430.30 461.12,430.30 466.36,430.30 471.61,430.30 476.85,430.30 482.10,430.30 487.34,430.30 492.59,430.30 497.83,430.30 503.08,430.30 508.32,430.30 513.57,418.11 518.81,395.25 524.05,355.33 529.30,338.88 534.54,330.34 539.79,327.29 545.03,327.90 550.28,337.66 555.52,354.11 560.77,378.49 566.01,405.92 571.26,430.30 576.50,430.30 581.75,430.30 587.00,430.30 592.24,430.30 597.49,430.30 602.73,430.30 607.98,430.30 613.22,430.30 618.47,430.30 623.71,430.30 628.96,430.30 634.20,430.30 639.45,413.54 644.69,390.68 649.94,369.35 655.18,348.02 660.42,332.78 665.67,328.51 670.91,329.12 676.16,338.88 681.40,354.11 686.65,380.02 691.89,408.97 697.14,426.64 702.38,430.30 707.63,430.30 712.88,430.30 718.12,430.30 723.37,430.30 728.61,430.30 733.86,430.30 739.10,430.30 744.35,430.30 749.59,430.30 754.84,430.30 760.08,430.30 765.33,412.01 770.57,390.68 775.82,369.35 781.06,349.85 786.31,335.83 791.55,329.73 796.80,331.26 802.04,338.88 807.29,357.16 812.53,380.32 817.78,405.92 823.02,430.30 828.26,430.30 833.51,430.30 838.75,430.30 844.00,430.30 849.25,430.30 854.49,430.30 859.74,430.30 864.98,430.30 870.23,430.30 875.47,430.30 880.72,430.30 885.96,430.30 891.21,421.16 896.45,402.87 901.70,386.42 906.94,391.90 912.19,369.35 917.43,347.41 922.68,380.02 927.92,386.11 933.17,391.90 938.41,407.44 943.66,417.81 948.90,430.30 954.14,430.30" fill="none" stroke="#f49b25" stroke-width="1.3" stroke-linejoin="round"/>
<g font-family="Liberation Sans" font-size="5.9" fill="#555"><text x="203.8" y="432.00" text-anchor="end">0</text><text x="203.8" y="401.52" text-anchor="end">10k</text><text x="203.8" y="371.05" text-anchor="end">20k</text><text x="203.8" y="340.57" text-anchor="end">30k</text><text x="203.8" y="310.10" text-anchor="end">40k</text></g>
<g font-family="Liberation Sans" font-size="5.9" fill="#555"><text x="214.60" y="438.8" text-anchor="middle">16</text><line x1="214.60" x2="214.60" y1="430.8" y2="432.8" stroke="#aaa" stroke-width="0.8"/><text x="340.48" y="438.8" text-anchor="middle">17</text><line x1="340.48" x2="340.48" y1="430.8" y2="432.8" stroke="#aaa" stroke-width="0.8"/><text x="466.36" y="438.8" text-anchor="middle">18</text><line x1="466.36" x2="466.36" y1="430.8" y2="432.8" stroke="#aaa" stroke-width="0.8"/><text x="592.24" y="438.8" text-anchor="middle">19</text><line x1="592.24" x2="592.24" y1="430.8" y2="432.8" stroke="#aaa" stroke-width="0.8"/></g>
<text x="203.5" y="300.2" font-family="Liberation Sans" font-size="6.3" fill="#555">Wh</text>
<rect x="210.5" y="471.5" width="749" height="14" fill="none" stroke="#dedede" stroke-width="1" rx="1"/>
<polyline points="211,483 227,483 227.5,483 227.8,475.8 228.4,475.8 228.7,483 231.6,483 231.9,475.9 232.5,475.9 232.8,483 235.7,483 236.0,475.6 236.6,475.6 236.9,483 239.8,483 240.1,480.5 240.7,480.5 241.0,483 243.9,483 244.2,476.0 244.8,476.0 245.1,483 248.0,483 248.3,475.9 248.9,475.9 249.2,483 252.1,483 252.4,480.5 253.0,480.5 253.3,483 256.2,483 256.5,475.0 257.1,475.0 257.4,483 260.3,483 260.6,478.5 261.2,478.5 261.5,483 264.4,483 264.7,475.2 265.3,475.2 265.6,483 268.5,483 268.8,475.3 269.4,475.3 269.7,483 272.6,483 272.9,474.8 273.5,474.8 273.8,483 276.7,483 277.0,480.5 277.6,480.5 277.9,483 280.8,483 281.1,475.7 281.7,475.7 282.0,483 284.9,483 285.2,478.5 285.8,478.5 286.1,483 289.0,483 289.3,480.5 289.9,480.5 290.2,483 293.1,483 293.4,475.0 294.0,475.0 294.3,483 297.2,483 297.5,478.5 298.1,478.5 298.4,483 301.3,483 301.6,475.2 302.2,475.2 302.5,483 305.4,483 305.7,475.3 306.3,475.3 306.6,483 309.5,483 309.8,480.5 310.4,480.5 310.7,483 313.6,483 313.9,480.5 314.5,480.5 314.8,483 317.7,483 318.0,478.5 318.6,478.5 318.9,483 321.8,483 322.1,475.5 322.7,475.5 323.0,483 325.9,483 326.2,475.3 326.8,475.3 327.1,483 330.0,483 330.3,475.6 330.9,475.6 331.2,483 334.1,483 334.4,475.2 335.0,475.2 335.3,483 338.2,483 338.5,475.3 339.1,475.3 339.4,483 342.3,483 342.6,474.9 343.2,474.9 343.5,483 346.4,483 346.7,475.7 347.3,475.7 347.6,483 350.5,483 350.8,475.9 351.4,475.9 351.7,483 354.6,483 354.9,475.1 355.5,475.1 355.8,483 358.7,483 359.0,478.5 359.6,478.5 359.9,483 362.8,483 363.1,476.0 363.7,476.0 364.0,483 366.9,483 367.2,475.1 367.8,475.1 368.1,483 371.0,483 371.3,474.9 371.9,474.9 372.2,483 375.1,483 375.4,475.2 376.0,475.2 376.3,483 379.2,483 379.5,475.3 380.1,475.3 380.4,483 383.3,483 383.6,475.0 384.2,475.0 384.5,483 387.4,483 387.7,475.4 388.3,475.4 388.6,483 391.5,483 391.8,475.9 392.4,475.9 392.7,483 395.6,483 395.9,475.2 396.5,475.2 396.8,483 399.7,483 400.0,475.0 400.6,475.0 400.9,483 403.8,483 404.1,475.5 404.7,475.5 405.0,483 407.9,483 408.2,476.0 408.8,476.0 409.1,483 412.0,483 412.3,475.8 412.9,475.8 413.2,483 416.1,483 416.4,480.5 417.0,480.5 417.3,483 420.2,483 420.5,480.5 421.1,480.5 421.4,483 424.3,483 424.6,475.8 425.2,475.8 425.5,483 428.4,483 428.7,475.5 429.3,475.5 429.6,483 432.5,483 432.8,475.9 433.4,475.9 433.7,483 436.6,483 436.9,475.3 437.5,475.3 437.8,483 440.7,483 441.0,475.0 441.6,475.0 441.9,483 444.8,483 445.1,475.7 445.7,475.7 446.0,483 448.9,483 449.2,475.6 449.8,475.6 450.1,483 453.0,483 453.3,474.9 453.9,474.9 454.2,483 457.1,483 457.4,478.5 458.0,478.5 458.3,483 461.2,483 461.5,478.5 462.1,478.5 462.4,483 465.3,483 465.6,475.7 466.2,475.7 466.5,483 469.4,483 469.7,475.3 470.3,475.3 470.6,483 473.5,483 473.8,476.0 474.4,476.0 474.7,483 477.6,483 477.9,475.6 478.5,475.6 478.8,483 481.7,483 482.0,474.9 482.6,474.9 482.9,483 485.8,483 486.1,475.4 486.7,475.4 487.0,483 489.9,483 490.2,475.2 490.8,475.2 491.1,483 494.0,483 494.3,480.5 494.9,480.5 495.2,483 498.1,483 498.4,475.1 499.0,475.1 499.3,483 502.2,483 502.5,475.0 503.1,475.0 503.4,483 506.3,483 506.6,475.5 507.2,475.5 507.5,483 510.4,483 510.7,480.5 511.3,480.5 511.6,483 514.5,483 514.8,475.9 515.4,475.9 515.7,483 518.6,483 518.9,480.5 519.5,480.5 519.8,483 522.7,483 523.0,478.5 523.6,478.5 523.9,483 526.8,483 527.1,478.5 527.7,478.5 528.0,483 530.9,483 531.2,475.9 531.8,475.9 532.1,483 535.0,483 535.3,480.5 535.9,480.5 536.2,483 539.1,483 539.4,478.5 540.0,478.5 540.3,483 543.2,483 543.5,480.5 544.1,480.5 544.4,483 547.3,483 547.6,476.0 548.2,476.0 548.5,483 551.4,483 551.7,475.3 552.3,475.3 552.6,483 555.5,483 555.8,478.5 556.4,478.5 556.7,483 559.6,483 559.9,475.6 560.5,475.6 560.8,483 563.7,483 564.0,475.9 564.6,475.9 564.9,483 567.8,483 568.1,474.8 568.7,474.8 569.0,483 571.9,483 572.2,475.4 572.8,475.4 573.1,483 576.0,483 576.3,480.5 576.9,480.5 577.2,483 580.1,483 580.4,480.5 581.0,480.5 581.3,483 584.2,483 584.5,475.7 585.1,475.7 585.4,483 588.3,483 588.6,475.8 589.2,475.8 589.5,483 600.6,483 600.9,475.8 601.5,475.8 601.8,483 604.7,483 605.0,476.0 605.6,476.0 605.9,483 608.8,483 609.1,474.8 609.7,474.8 610.0,483 612.9,483 613.2,475.2 613.8,475.2 614.1,483 617.0,483 617.3,475.6 617.9,475.6 618.2,483 621.1,483 621.4,478.5 622.0,478.5 622.3,483 625.2,483 625.5,475.4 626.1,475.4 626.4,483 629.3,483 629.6,475.6 630.2,475.6 630.5,483 633.4,483 633.7,475.0 634.3,475.0 634.6,483 637.5,483 637.8,475.0 638.4,475.0 638.7,483 641.6,483 641.9,475.0 642.5,475.0 642.8,483 645.7,483 646.0,475.7 646.6,475.7 646.9,483 649.8,483 650.1,475.6 650.7,475.6 651.0,483 653.9,483 654.2,480.5 654.8,480.5 655.1,483 658.0,483 658.3,480.5 658.9,480.5 659.2,483 670.3,483 670.6,474.9 671.2,474.9 671.5,483 674.4,483 674.7,474.9 675.3,474.9 675.6,483 678.5,483 678.8,474.9 679.4,474.9 679.7,483 682.6,483 682.9,475.7 683.5,475.7 683.8,483 686.7,483 687.0,475.8 687.6,475.8 687.9,483 690.8,483 691.1,478.5 691.7,478.5 692.0,483 694.9,483 695.2,474.9 695.8,474.9 696.1,483 699.0,483 699.3,475.4 699.9,475.4 700.2,483 703.1,483 703.4,475.0 704.0,475.0 704.3,483 715.4,483 715.7,475.1 716.3,475.1 716.6,483 719.5,483 719.8,475.4 720.4,475.4 720.7,483 723.6,483 723.9,478.5 724.5,478.5 724.8,483 727.7,483 728.0,475.6 728.6,475.6 728.9,483 731.8,483 732.1,474.8 732.7,474.8 733.0,483 735.9,483 736.2,475.5 736.8,475.5 737.1,483 740.0,483 740.3,475.1 740.9,475.1 741.2,483 744.1,483 744.4,478.5 745.0,478.5 745.3,483 748.2,483 748.5,478.5 749.1,478.5 749.4,483 752.3,483 752.6,478.5 753.2,478.5 753.5,483 756.4,483 756.7,475.0 757.3,475.0 757.6,483 760.5,483 760.8,478.5 761.4,478.5 761.7,483 764.6,483 764.9,474.8 765.5,474.8 765.8,483 768.7,483 769.0,475.6 769.6,475.6 769.9,483 772.8,483 773.1,475.8 773.7,475.8 774.0,483 776.9,483 777.2,480.5 777.8,480.5 778.1,483 781.0,483 781.3,475.2 781.9,475.2 782.2,483 785.1,483 785.4,474.9 786.0,474.9 786.3,483 789.2,483 789.5,475.0 790.1,475.0 790.4,483 793.3,483 793.6,475.7 794.2,475.7 794.5,483 797.4,483 797.7,475.6 798.3,475.6 798.6,483 801.5,483 801.8,475.3 802.4,475.3 802.7,483 805.6,483 805.9,475.5 806.5,475.5 806.8,483 809.7,483 810.0,478.5 810.6,478.5 810.9,483 813.8,483 814.1,475.6 814.7,475.6 815.0,483 817.9,483 818.2,475.3 818.8,475.3 819.1,483 822.0,483 822.3,475.5 822.9,475.5 823.2,483 826.1,483 826.4,475.4 827.0,475.4 827.3,483 830.2,483 830.5,475.4 831.1,475.4 831.4,483 834.3,483 834.6,480.5 835.2,480.5 835.5,483 838.4,483 838.7,475.8 839.3,475.8 839.6,483 842.5,483 842.8,480.5 843.4,480.5 843.7,483 858.9,483 859.2,475.3 859.8,475.3 860.1,483 863.0,483 863.3,475.4 863.9,475.4 864.2,483 867.1,483 867.4,475.1 868.0,475.1 868.3,483 871.2,483 871.5,480.5 872.1,480.5 872.4,483 875.3,483 875.6,475.7 876.2,475.7 876.5,483 879.4,483 879.7,475.1 880.3,475.1 880.6,483 883.5,483 883.8,475.3 884.4,475.3 884.7,483 887.6,483 887.9,474.9 888.5,474.9 888.8,483 891.7,483 892.0,475.3 892.6,475.3 892.9,483 895.8,483 896.1,475.4 896.7,475.4 897.0,483 904.0,483 904.3,475.4 904.9,475.4 905.2,483 908.1,483 908.4,474.9 909.0,474.9 909.3,483 912.2,483 912.5,474.9 913.1,474.9 913.4,483 916.3,483 916.6,475.7 917.2,475.7 917.5,483 920.4,483 920.7,474.9 921.3,474.9 921.6,483 924.5,483 924.8,475.8 925.4,475.8 925.7,483 928.6,483 928.9,478.5 929.5,478.5 929.8,483 932.7,483 933.0,475.9 933.6,475.9 933.9,483 936.8,483 937.1,475.9 937.7,475.9 938.0,483 940.9,483 941.2,475.1 941.8,475.1 942.1,483 945.0,483 945.3,475.8 945.9,475.8 946.2,483 949.1,483 949.4,475.2 950.0,475.2 950.3,483 953.2,483 953.5,478.5 954.1,478.5 954.4,483 957.5,483" fill="none" stroke="#d2d2d2" stroke-width="0.7"/>
<rect x="399.6" y="468.6" width="7.8" height="16.6" fill="#e9ecf7" stroke="#c8cde8" stroke-width="0.7" rx="1"/>
<rect x="400.9" y="471.4" width="5.2" height="11.6" fill="#d5daf0" rx="0.5"/>
</svg>

<!-- tooltip -->
<div class="abs tip" style="left:696.3px;top:391.3px;width:151.5px;height:77.6px;background:#fff;border-radius:3px;box-shadow:0 1px 4px rgba(0,0,0,0.13)">
  <div class="r" style="left:5.8px;top:6.1px;color:#555">2025-09-19 10.00.00</div>
  <div class="dot" style="top:18.3px;background:#f7a22e"></div><div class="r" style="top:17.4px">Produccion total</div><div class="val" style="top:17.4px">16.5 KWh</div>
  <div class="dot" style="top:30.2px;background:#d11f3d"></div><div class="r" style="top:29.3px">Demands total</div><div class="val" style="top:29.3px">20,37 KWh</div>
  <div class="dot" style="top:42.1px;background:#1d3b86"></div><div class="r" style="top:41.2px">Energia sutocontumida</div><div class="val" style="top:41.2px">14,04 KWh</div>
  <div class="dot" style="top:54.0px;background:#4db497"></div><div class="r" style="top:53.1px">Energia concumida de red</div><div class="val" style="top:53.1px">6,33 KWh</div>
  <div class="dot" style="top:65.9px;background:#e0c52c"></div><div class="r" style="top:65.0px">Energia inyestads en red</div><div class="val" style="top:65.0px">2,46 KWh</div>
</div>
<div class="abs" style="left:1023px;top:52px;width:1px;height:524px;background:#f0f0f0"></div>
</body></html>
